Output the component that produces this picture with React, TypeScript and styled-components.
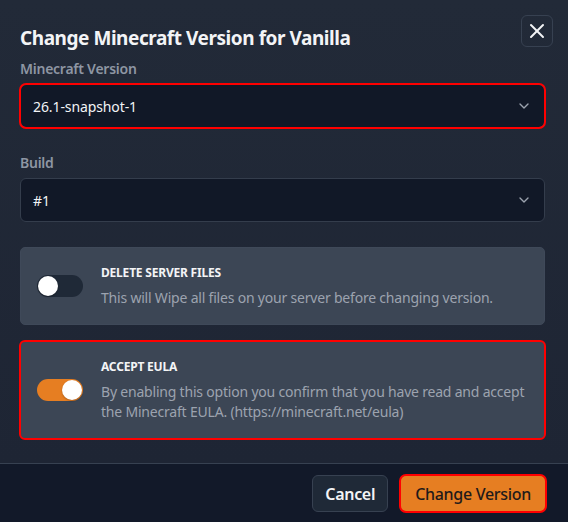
import React from "react";
import styled, { createGlobalStyle } from "styled-components";
import { X, ChevronDown } from "lucide-react";

const Global = createGlobalStyle`
  html, body { margin: 0; padding: 0; background: #111827; }
  body { font-family: "Noto Sans", "Open Sans", sans-serif; -webkit-font-smoothing: antialiased; }
  * { box-sizing: border-box; }
`;

const Modal = styled.div`
  width: 568px;
  height: 522px;
  display: flex;
  flex-direction: column;
  overflow: hidden;
`;

const Main = styled.div`
  flex: 1;
  display: flex;
  flex-direction: column;
  padding: 15px 23px 24px 20px;
  background: linear-gradient(180deg, #222a38 0%, #1e2534 100%);
  border-bottom: 1px solid #374151;
`;

const Header = styled.div`
  display: flex;
  justify-content: space-between;
  align-items: flex-start;
  margin-right: -8px;
  margin-bottom: 7px;
`;

const Title = styled.h2`
  margin: 9px 0 0;
  font-size: 19px;
  line-height: 28px;
  font-weight: 700;
  letter-spacing: -0.45px;
  color: #f3f4f6;
`;

const CloseButton = styled.button`
  width: 32px;
  height: 32px;
  display: flex;
  align-items: center;
  justify-content: center;
  padding: 0;
  background: transparent;
  border: 1px solid #374151;
  border-radius: 6px;
  color: #f3f4f6;
  cursor: pointer;
`;

const Field = styled.div`
  display: flex;
  flex-direction: column;
  gap: 5px;
  margin-bottom: 25px;
`;

const Label = styled.label`
  font-size: 14px;
  line-height: 20px;
  font-weight: 600;
  letter-spacing: -0.25px;
  color: #8e96a3;
`;

const Select = styled.div<{ $invalid?: boolean }>`
  height: 44px;
  display: flex;
  align-items: center;
  justify-content: space-between;
  padding: 0 12px;
  background: #111827;
  border: 1px solid #343d4c;
  border-radius: 6px;
  color: #f3f4f6;
  font-size: 14px;
  letter-spacing: -0.1px;
  outline: ${(p) => (p.$invalid ? "2px solid #ff0000" : "none")};
  outline-offset: -1px;
`;

const Cards = styled.div`
  display: flex;
  flex-direction: column;
  gap: 16px;
`;

const Card = styled.div<{ $invalid?: boolean }>`
  display: flex;
  align-items: center;
  gap: 18px;
  padding: 16px 15px 16px 16px;
  background: #3c4655;
  border: 1px solid #3f4959;
  border-radius: 5px;
  outline: ${(p) => (p.$invalid ? "2px solid #ff0000" : "none")};
  outline-offset: -1px;
`;

const Track = styled.div<{ $on?: boolean }>`
  flex: none;
  width: 46px;
  height: 22px;
  border-radius: 11px;
  padding: 1px;
  display: flex;
  justify-content: ${(p) => (p.$on ? "flex-end" : "flex-start")};
  background: ${(p) => (p.$on ? "#e67e22" : "#1f2937")};
`;

const Knob = styled.div`
  width: 20px;
  height: 20px;
  border-radius: 50%;
  background: #ffffff;
  box-shadow: 0 1px 2px rgba(0, 0, 0, 0.25);
`;

const CardText = styled.div`
  display: flex;
  flex-direction: column;
  gap: 6px;
`;

const CardTitle = styled.div`
  font-size: 12px;
  line-height: 18px;
  font-weight: 700;
  letter-spacing: -0.2px;
  color: #f3f4f6;
  text-transform: uppercase;
`;

const CardDesc = styled.div`
  font-size: 14px;
  line-height: 20px;
  letter-spacing: -0.2px;
  color: #9ca3af;
`;

const Footer = styled.div`
  height: 58px;
  flex: none;
  display: flex;
  justify-content: flex-end;
  align-items: flex-start;
  gap: 12px;
  padding: 11px 22px 0 0;
  background: #121929;
`;

const Button = styled.button<{ $primary?: boolean }>`
  height: 37px;
  padding: 0 ${(p) => (p.$primary ? 14 : 12)}px;
  border-radius: 6px;
  font-family: inherit;
  font-size: 16px;
  letter-spacing: -0.3px;
  font-weight: ${(p) => (p.$primary ? 500 : 600)};
  color: ${(p) => (p.$primary ? "#1f1a1a" : "#f3f4f6")};
  background: ${(p) => (p.$primary ? "#e67e22" : "#1f2937")};
  border: 1px solid ${(p) => (p.$primary ? "#e67e22" : "#374151")};
  outline: ${(p) => (p.$primary ? "2px solid #ff0000" : "none")};
  outline-offset: -1px;
  cursor: pointer;
`;

export default function App() {
  return (
    <>
      <Global />
      <Modal>
        <Main>
          <Header>
            <Title>Change Minecraft Version for Vanilla</Title>
            <CloseButton aria-label="Close">
              <X size={24} strokeWidth={2} />
            </CloseButton>
          </Header>
          <Field>
            <Label>Minecraft Version</Label>
            <Select $invalid>
              <span>26.1-snapshot-1</span>
              <ChevronDown size={16} color="#9ca3af" />
            </Select>
          </Field>
          <Field>
            <Label>Build</Label>
            <Select>
              <span>#1</span>
              <ChevronDown size={16} color="#9ca3af" />
            </Select>
          </Field>
          <Cards>
            <Card>
              <Track>
                <Knob />
              </Track>
              <CardText>
                <CardTitle>Delete Server Files</CardTitle>
                <CardDesc>This will Wipe all files on your server before changing version.</CardDesc>
              </CardText>
            </Card>
            <Card $invalid>
              <Track $on>
                <Knob />
              </Track>
              <CardText>
                <CardTitle>Accept EULA</CardTitle>
                <CardDesc>
                  By enabling this option you confirm that you have read and accept the Minecraft EULA.
                  (https://minecraft.net/eula)
                </CardDesc>
              </CardText>
            </Card>
          </Cards>
        </Main>
        <Footer>
          <Button>Cancel</Button>
          <Button $primary>Change Version</Button>
        </Footer>
      </Modal>
    </>
  );
}
